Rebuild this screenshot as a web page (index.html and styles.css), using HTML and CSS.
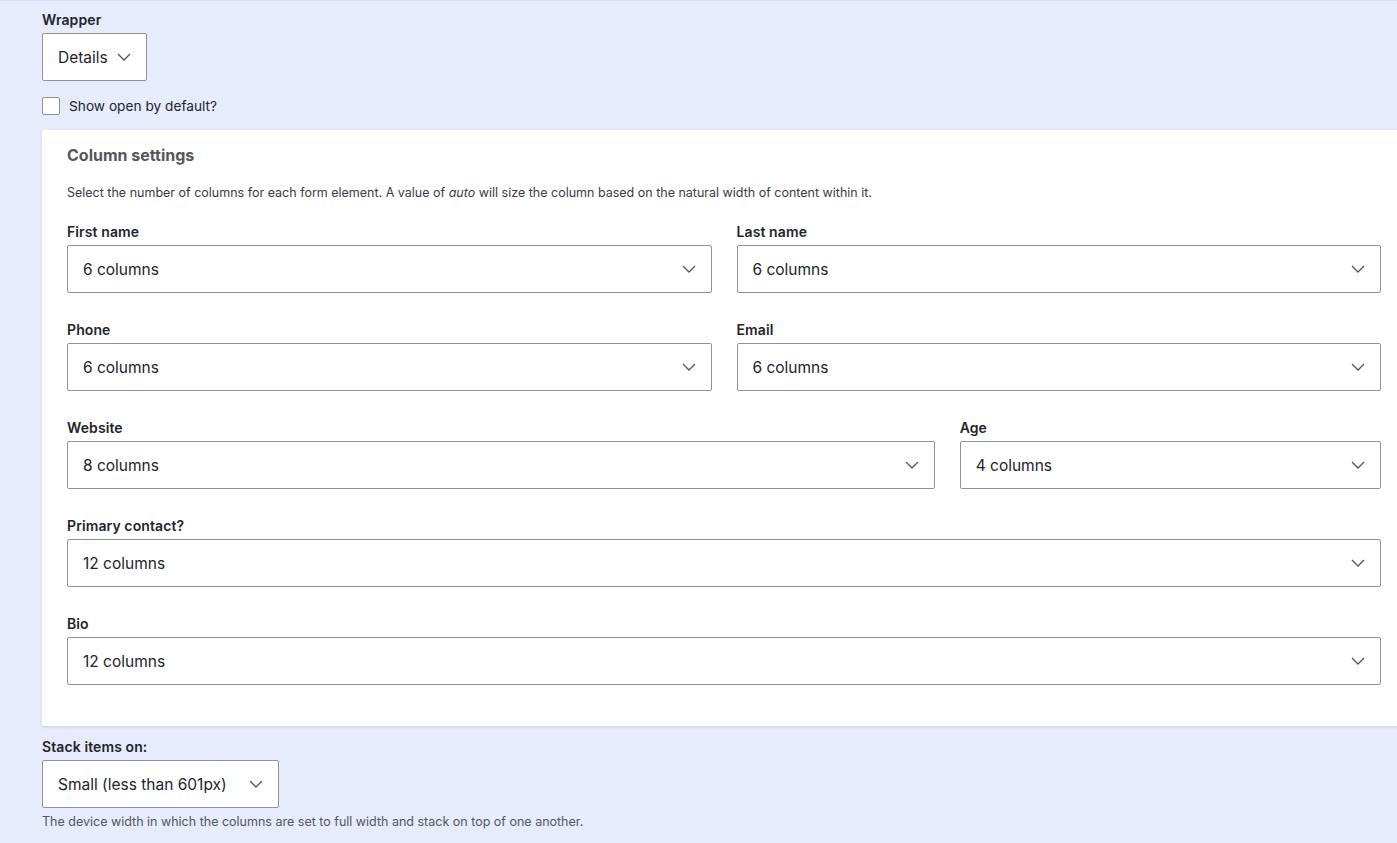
FILE: index.html
```html
<!DOCTYPE html>
<html lang="en">
<head>
    <meta charset="UTF-8">
    <meta name="viewport" content="width=device-width, initial-scale=1.0">
    <title>Column settings</title>
    <link rel="stylesheet" href="styles.css">
</head>
<body>
    <div class="page">
        <div class="form-item">
            <div class="form-label">Wrapper</div>
            <div class="select select-wrapper">
                <span>Details</span>
                <svg class="chevron" width="14" height="8" viewBox="0 0 14 8"><path d="M1 1l6 6 6-6" fill="none" stroke="#55565b" stroke-width="1.3"/></svg>
            </div>
        </div>

        <label class="checkbox-row">
            <span class="checkbox"></span>
            <span>Show open by default?</span>
        </label>

        <div class="panel">
            <h2 class="panel-title">Column settings</h2>
            <p class="panel-desc">Select the number of columns for each form element. A value of <em>auto</em> will size the column based on the natural width of content within it.</p>

            <div class="grid">
                <div class="cell span-6">
                    <div class="form-label">First name</div>
                    <div class="select"><span>6 columns</span><svg class="chevron" width="14" height="8" viewBox="0 0 14 8"><path d="M1 1l6 6 6-6" fill="none" stroke="#55565b" stroke-width="1.3"/></svg></div>
                </div>
                <div class="cell span-6">
                    <div class="form-label">Last name</div>
                    <div class="select"><span>6 columns</span><svg class="chevron" width="14" height="8" viewBox="0 0 14 8"><path d="M1 1l6 6 6-6" fill="none" stroke="#55565b" stroke-width="1.3"/></svg></div>
                </div>
                <div class="cell span-6">
                    <div class="form-label">Phone</div>
                    <div class="select"><span>6 columns</span><svg class="chevron" width="14" height="8" viewBox="0 0 14 8"><path d="M1 1l6 6 6-6" fill="none" stroke="#55565b" stroke-width="1.3"/></svg></div>
                </div>
                <div class="cell span-6">
                    <div class="form-label">Email</div>
                    <div class="select"><span>6 columns</span><svg class="chevron" width="14" height="8" viewBox="0 0 14 8"><path d="M1 1l6 6 6-6" fill="none" stroke="#55565b" stroke-width="1.3"/></svg></div>
                </div>
                <div class="cell span-8">
                    <div class="form-label">Website</div>
                    <div class="select"><span>8 columns</span><svg class="chevron" width="14" height="8" viewBox="0 0 14 8"><path d="M1 1l6 6 6-6" fill="none" stroke="#55565b" stroke-width="1.3"/></svg></div>
                </div>
                <div class="cell span-4">
                    <div class="form-label">Age</div>
                    <div class="select"><span>4 columns</span><svg class="chevron" width="14" height="8" viewBox="0 0 14 8"><path d="M1 1l6 6 6-6" fill="none" stroke="#55565b" stroke-width="1.3"/></svg></div>
                </div>
                <div class="cell span-12">
                    <div class="form-label">Primary contact?</div>
                    <div class="select"><span>12 columns</span><svg class="chevron" width="14" height="8" viewBox="0 0 14 8"><path d="M1 1l6 6 6-6" fill="none" stroke="#55565b" stroke-width="1.3"/></svg></div>
                </div>
                <div class="cell span-12">
                    <div class="form-label">Bio</div>
                    <div class="select"><span>12 columns</span><svg class="chevron" width="14" height="8" viewBox="0 0 14 8"><path d="M1 1l6 6 6-6" fill="none" stroke="#55565b" stroke-width="1.3"/></svg></div>
                </div>
            </div>
        </div>

        <div class="form-item stack-item">
            <div class="form-label">Stack items on:</div>
            <div class="select select-stack">
                <span>Small (less than 601px)</span>
                <svg class="chevron" width="14" height="8" viewBox="0 0 14 8"><path d="M1 1l6 6 6-6" fill="none" stroke="#55565b" stroke-width="1.3"/></svg>
            </div>
            <div class="form-desc">The device width in which the columns are set to full width and stack on top of one another.</div>
        </div>
    </div>
</body>
</html>
```

FILE: styles.css
```css
html, body {
    overflow: hidden;
}
body {
    margin: 0;
    font-family: Inter, "Noto Sans", sans-serif;
    color: #232429;
    background-color: #e6ecfc;
    border-top: 1px solid #d6ddf3;
}
.page {
    padding: 10px 0 0 42px;
}
.form-label {
    font-size: 14px;
    font-weight: 600;
    line-height: 18px;
    margin-bottom: 4px;
    letter-spacing: 0.1px;
}
.select {
    box-sizing: border-box;
    height: 48px;
    display: flex;
    align-items: center;
    justify-content: space-between;
    padding: 0 15px 0 15px;
    background: #fff;
    border: 1px solid #8e929c;
    border-radius: 2px;
    font-size: 15.5px;
}
.select-wrapper {
    width: 105px;
}
.select-stack {
    width: 237px;
}
.chevron {
    flex-shrink: 0;
}
.checkbox-row {
    display: flex;
    align-items: center;
    gap: 9px;
    margin-top: 16px;
    font-size: 13.7px;
    color: #232429;
}
.checkbox {
    box-sizing: border-box;
    width: 18px;
    height: 18px;
    background: #fff;
    border: 1px solid #8e929c;
    border-radius: 2px;
}
.panel {
    margin-top: 15px;
    margin-right: -9px;
    background: #fff;
    padding: 15px 25px 13px 25px;
    box-shadow: 0 1px 3px rgba(0, 0, 50, 0.12);
    border-radius: 2px 0 0 2px;
}
.panel-title {
    margin: 0;
    font-size: 16px;
    font-weight: 700;
    line-height: 20px;
    color: #55565b;
}
.panel-desc {
    margin: 19px 0 21px 0;
    font-size: 12.5px;
    line-height: 18px;
    color: #3b3c42;
}
.grid {
    display: grid;
    grid-template-columns: repeat(12, 1fr);
    column-gap: 25px;
}
.cell {
    margin-bottom: 28px;
}
.span-4 { grid-column: span 4; }
.span-6 { grid-column: span 6; }
.span-8 { grid-column: span 8; }
.span-12 { grid-column: span 12; }
.stack-item {
    margin-top: 12px;
}
.form-desc {
    margin-top: 5px;
    font-size: 12.5px;
    line-height: 18px;
    color: #55565b;
}
```
